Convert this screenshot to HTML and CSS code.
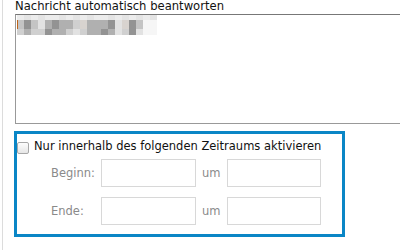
FILE: index.html
```html
<!DOCTYPE html>
<html lang="de">
<head>
<meta charset="utf-8">
<link rel="stylesheet" href="styles.css">
</head>
<body>
<div class="page">
  <div class="panel">
    <div class="title">Nachricht automatisch beantworten</div>
    <div class="textarea">
      <span class="caret"></span>
      <div class="blur">
        <div class="row r1"><i class="a"></i><i class="b"></i><i class="a"></i><i class="b"></i><i class="a"></i><i class="a"></i><i class="b"></i><i class="a"></i><i class="b"></i><i class="a"></i><i class="b"></i><i class="a"></i><i class="a"></i><i class="b"></i><i class="a"></i><i class="b"></i><i class="a"></i><i class="b"></i><i class="a"></i><i class="b"></i></div>
        <div class="row r2"><i class="c"></i><i class="e"></i><i class="c"></i><i class="g"></i><i class="d"></i><i class="e"></i><i class="d"></i><i class="d"></i><i class="f"></i><i class="w"></i><i class="d"></i><i class="d"></i><i class="d"></i><i class="e"></i><i class="g"></i><i class="w"></i><i class="e"></i><i class="c"></i><i class="h"></i><i class="h"></i></div>
        <div class="row r3"><i class="f"></i><i class="d"></i><i class="f"></i><i class="f"></i><i class="e"></i><i class="d"></i><i class="d"></i><i class="f"></i><i class="g"></i><i class="f"></i><i class="d"></i><i class="d"></i><i class="e"></i><i class="d"></i><i class="g"></i><i class="f"></i><i class="e"></i><i class="g"></i><i class="h"></i><i class="h"></i></div>
      </div>
    </div>
    <div class="period">
      <label class="check-row"><span class="checkbox"></span><span>Nur innerhalb des folgenden Zeitraums aktivieren</span></label>
      <div class="fields">
        <span class="lbl">Beginn:</span><span class="input"></span><span class="lbl um">um</span><span class="input"></span>
        <span class="lbl">Ende:</span><span class="input"></span><span class="lbl um">um</span><span class="input"></span>
      </div>
    </div>
  </div>
</div>
</body>
</html>
```
FILE: styles.css
```css
html, body {
  margin: 0;
  padding: 0;
  background: #fff;
  overflow: hidden;
  width: 400px;
  height: 250px;
}
body {
  font-family: "DejaVu Sans", sans-serif;
  font-size: 11.5px;
  color: #111;
}
.page {
  padding-left: 2px;
  height: 250px;
}
.panel {
  border-left: 1px solid #dcdcdc;
  padding-left: 12px;
  height: 250px;
}
.title {
  height: 14px;
  line-height: 13px;
  font-size: 11.6px;
  white-space: nowrap;
}
.textarea {
  position: relative;
  height: 108px;
  border: 1px solid #999;
  border-top-color: #777;
  border-right: none;
  background: #fff;
}
.caret {
  position: absolute;
  left: 1px;
  top: 5px;
  width: 1px;
  height: 9px;
  background: #c0651a;
}
.blur {
  padding-left: 1px;
}
.row {
  display: flex;
}
.row i {
  display: block;
  width: 7px;
}
.r1 i { height: 5px; }
.r2 i { height: 9px; }
.r3 i { height: 6px; }
.r1 .a { background: #ececec; }
.r1 .b { background: #e4e4e4; }
.c { background: #c4c4c4; }
.d { background: #b0b0b0; }
.e { background: #939393; }
.f { background: #d0d0d0; }
.g { background: #e2e2e2; }
.h { background: #f6f6f6; }
.w { background: #d8d3cf; }
.period {
  margin-top: 7px;
  margin-left: -1px;
  width: 325px;
  height: 100px;
  border: 3px solid #0a86c6;
}
.check-row {
  display: flex;
  align-items: center;
  gap: 5px;
  height: 22px;
  padding-top: 1px;
  margin-bottom: 2px;
}
.checkbox {
  display: block;
  width: 10px;
  height: 10px;
  margin-top: 4px;
  border: 1px solid #a8a8a8;
  border-radius: 2px;
  background: linear-gradient(#fdfdfd, #e6e6e6);
}
.fields {
  display: grid;
  grid-template-columns: 50px 95px 31px 94px;
  grid-template-rows: 28px 28px;
  row-gap: 10px;
  padding-left: 34px;
  margin-top: 2px;
  align-items: center;
}
.lbl {
  color: #8a8a8a;
}
.um {
  padding-left: 6px;
}
.input {
  display: block;
  height: 26px;
  border: 1px solid #d8d8d8;
  background: #fff;
}
```
